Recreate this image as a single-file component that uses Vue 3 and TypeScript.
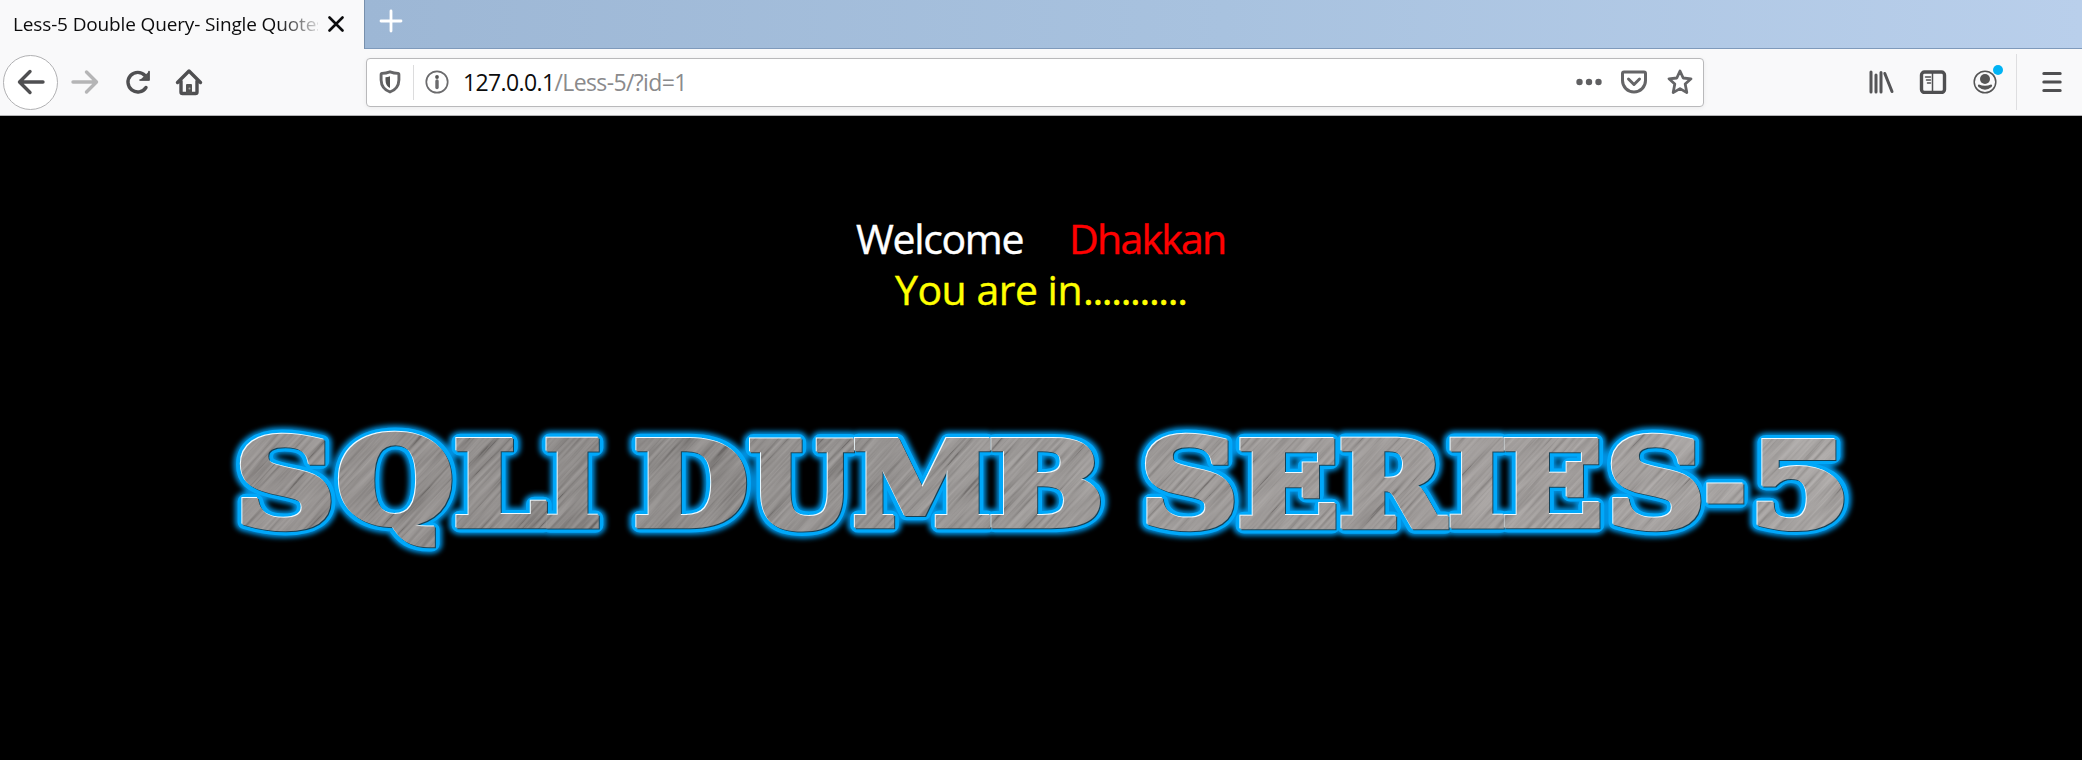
<script setup lang="ts">
interface Glyph { ch: string; x1: number; x2: number; y1: number; y2: number }

const glyphs: Glyph[] = [
  { ch: 'S', x1: 240, x2: 331, y1: 431, y2: 529 },
  { ch: 'Q', x1: 339, x2: 452, y1: 430, y2: 546 },
  { ch: 'L', x1: 456, x2: 547, y1: 435, y2: 526 },
  { ch: 'I', x1: 546, x2: 599, y1: 435, y2: 526 },
  { ch: 'D', x1: 636, x2: 747, y1: 435, y2: 526 },
  { ch: 'U', x1: 750, x2: 855, y1: 435, y2: 529 },
  { ch: 'M', x1: 855, x2: 991, y1: 435, y2: 526 },
  { ch: 'B', x1: 991, x2: 1100, y1: 435, y2: 526 },
  { ch: 'S', x1: 1145, x2: 1234, y1: 431, y2: 529 },
  { ch: 'E', x1: 1240, x2: 1336, y1: 435, y2: 527 },
  { ch: 'R', x1: 1341, x2: 1449, y1: 435, y2: 527 },
  { ch: 'I', x1: 1450, x2: 1504, y1: 435, y2: 526 },
  { ch: 'E', x1: 1504, x2: 1600, y1: 435, y2: 526 },
  { ch: 'S', x1: 1611, x2: 1701, y1: 431, y2: 529 },
  { ch: '-', x1: 1707, x2: 1744, y1: 482, y2: 502 },
  { ch: '5', x1: 1757, x2: 1844, y1: 435, y2: 529 },
]

// Stretch each letter so that its ink, with the thickening stroke, fills its box.
const inset = 3.5
const ctx = document.createElement('canvas').getContext('2d')!
ctx.font = 'bold 120px "DejaVu Serif"'
const letters = glyphs.map((g) => {
  const m = ctx.measureText(g.ch)
  const w = m.actualBoundingBoxRight + m.actualBoundingBoxLeft
  const h = m.actualBoundingBoxAscent + m.actualBoundingBoxDescent
  const sx = (g.x2 - g.x1 - inset * 2) / w
  const sy = (g.y2 - g.y1 - inset * 2) / h
  const tx = g.x1 + inset + m.actualBoundingBoxLeft * sx
  const ty = g.y1 + inset + m.actualBoundingBoxAscent * sy
  return { ch: g.ch, transform: `matrix(${sx} 0 0 ${sy} ${tx} ${ty - 410})` }
})
</script>

<template>
  <div class="window">
    <header class="tabs">
      <div class="tab">
        <span class="title">Less-5 Double Query- Single Quotes</span>
        <svg class="close" width="16" height="16" viewBox="0 0 16 16"><path d="M1.5 1.5l13 13M14.5 1.5l-13 13" /></svg>
      </div>
      <div class="strip">
        <svg width="24" height="24" viewBox="0 0 24 24"><path d="M12 2v20M2 12h20" /></svg>
      </div>
    </header>

    <nav class="toolbar">
      <div class="nav">
        <span class="back">
          <svg width="28" height="26" viewBox="0 0 28 26"><path class="thick" d="M26 13H3M13 2.5L2.5 13L13 23.5" /></svg>
        </span>
        <svg class="fwd" width="28" height="26" viewBox="0 0 28 26"><path class="thick" d="M2 13h23M15.500 3L25.500 13L15.500 23" /></svg>
        <svg class="reload" width="28" height="26" viewBox="0 0 28 26">
          <path class="thick" d="M21 18.500A9.800 9.800 0 1 1 20 6.500" />
          <path class="solid" d="M24.500 2v9.500h-10z" />
          <path class="thick2" d="M24 2.500v8.500h-9" />
        </svg>
        <svg class="home" width="28" height="28" viewBox="0 0 28 28">
          <path class="thick" d="M2.500 14.500L14 3l11.500 11.500M6 13v11a1.500 1.500 0 0 0 1.500 1.500h13A1.500 1.500 0 0 0 22 24V13" />
          <path class="solid" d="M11 26v-9a1 1 0 0 1 1-1h4a1 1 0 0 1 1 1v9z" />
          <circle cx="14.500" cy="20.500" r="1" fill="#aaa" />
        </svg>
      </div>

      <div class="url">
        <svg class="shield" width="22" height="24" viewBox="0 0 22 24">
          <path d="M11 1.800Q15 3.200 19 3.400Q20 3.500 19.900 5v5C19.700 16 16.500 20 11 22C5.500 20 2.300 16 2.100 10V5Q2 3.500 3 3.400Q7 3.200 11 1.800z" />
          <path class="solid" d="M11 6.200Q9 7 6.500 7.200V10c0 4 1.500 6.500 4.500 8z" />
        </svg>
        <i class="sep"></i>
        <svg class="info" width="24" height="24" viewBox="0 0 24 24">
          <circle cx="12" cy="12" r="10.700" />
          <path class="stem" d="M12 11v6.500" /><circle class="solid" cx="12" cy="7" r="1.900" />
        </svg>
        <span class="address"><b>127.0.0.1</b>/Less-5/?id=1</span>
        <svg class="dots" width="26" height="8" viewBox="0 0 26 8"><circle cx="3.500" cy="4" r="3.200" /><circle cx="13" cy="4" r="3.200" /><circle cx="22.500" cy="4" r="3.200" /></svg>
        <svg class="pocket" width="26" height="24" viewBox="0 0 26 24">
          <path d="M3 2h20a1.500 1.500 0 0 1 1.500 1.500v7a11.500 11.500 0 0 1-23 0v-7A1.500 1.500 0 0 1 3 2z" /><path d="M7.500 9L13 14.500L18.500 9" />
        </svg>
        <svg class="star" width="26" height="26" viewBox="0 0 26 26"><path d="M13 2l3.200 7 7.800.8-5.800 5.200 1.600 8.600-6.800-4-6.800 4L7.800 15 2 9.800l7.800-.8z" /></svg>
      </div>

      <div class="tools">
        <svg class="library" width="26" height="24" viewBox="0 0 26 24"><path d="M3 2v20M8 5v17M13 2.500v19.500M16.800 3.500L24 21.500" /></svg>
        <svg class="sidebar" width="28" height="24" viewBox="0 0 28 24">
          <rect x="2.500" y="2" width="23" height="20.500" rx="3" /><path class="thin" d="M13.500 3v19M6.500 7h5M7.500 10h4M8.500 13h3" />
        </svg>
        <div class="account">
          <svg width="24" height="24" viewBox="0 0 24 24">
            <circle cx="12" cy="12" r="10.800" /><circle class="solid" cx="12" cy="9" r="5" />
            <path class="solid" d="M6 14.500q6 2.500 12 0q2 .5.500 2.500q-6.500 5.500-13 0q-1.500-2 .5-2.500z" />
          </svg>
          <i class="badge"></i>
        </div>
        <i class="divider"></i>
        <svg class="menu" width="20" height="22" viewBox="0 0 20 22"><path d="M1.800 2.500h16.400M1.800 11h16.400M1.800 19.500h16.400" /></svg>
      </div>
    </nav>

    <main class="page">
      <p class="welcome"><span class="hello">Welcome</span><span class="name">Dhakkan</span></p>
      <p class="status"><span class="inn">You are in</span><span class="ell">...........</span></p>
      <svg class="banner" width="2082" height="170" viewBox="0 0 2082 170">
        <defs>
          <g id="word">
            <text v-for="(l, i) in letters" :key="i" :transform="l.transform">{{ l.ch }}</text>
          </g>
          <mask id="wordMask" maskUnits="userSpaceOnUse" x="0" y="0" width="2082" height="170">
            <use href="#word" class="face" />
          </mask>
          <linearGradient id="metal" x1="0" x2="1" y1="0" y2="0">
            <stop offset="0" stop-color="#918c8a" /><stop offset=".27" stop-color="#84807e" />
            <stop offset=".5" stop-color="#95918f" /><stop offset=".75" stop-color="#9a9593" /><stop offset="1" stop-color="#a39f9d" />
          </linearGradient>
          <filter id="soft" x="-2%" y="-20%" width="104%" height="140%"><feGaussianBlur stdDeviation="2.4" /></filter>
          <filter id="brushed" x="0" y="0" width="100%" height="100%">
            <feTurbulence type="fractalNoise" baseFrequency=".012 .3" numOctaves="3" seed="4" />
            <feColorMatrix values="1.8 0 0 0 -.4  1.8 0 0 0 -.4  1.8 0 0 0 -.4  0 0 0 0 1" />
          </filter>
        </defs>
        <use href="#word" class="glow" filter="url(#soft)" />
        <use href="#word" class="halo" />
        <use href="#word" class="shade" x="1" y="1" />
        <use href="#word" class="light" x="-1" y="-1" />
        <g mask="url(#wordMask)">
          <rect x="200" y="0" width="1680" height="170" fill="url(#metal)" />
          <g opacity=".19"><rect x="-300" y="-100" width="2400" height="1900" transform="rotate(-47)" filter="url(#brushed)" /></g>
        </g>
      </svg>
    </main>
  </div>
</template>

<style>
body { margin: 0; background: #000; }
</style>

<style scoped>
.window { width: 2082px; height: 760px; overflow: hidden; background: #000; font-family: "Open Sans", "Noto Sans", sans-serif; display: flex; flex-direction: column; }
svg { display: block; flex: none; fill: none; stroke-linecap: round; stroke-linejoin: round; }
.tabs { display: flex; height: 49px; background: #f9f9fa; flex: none; }
.tab { width: 364px; display: flex; align-items: center; box-sizing: border-box; padding: 0 0 2px 13px; }
.title { width: 305px; overflow: hidden; white-space: nowrap; font-size: 19px; line-height: 30px; letter-spacing: -0.14px; color: #0c0c0d; -webkit-mask-image: linear-gradient(90deg, #000 265px, transparent 312px); mask-image: linear-gradient(90deg, #000 265px, transparent 312px); }
.close { margin-left: 10px; stroke: #0c0c0d; stroke-width: 2.6; }
.strip { flex: 1; box-sizing: border-box; border-left: 1px solid #7890ac; border-bottom: 1px solid #7f9abb; background: linear-gradient(90deg, #9db7d5, #a8c2df 50%, #b9cfeb); padding: 9px 0 0 14px; }
.strip svg { stroke: #fff; stroke-width: 2.8; }
.toolbar { height: 67px; box-sizing: border-box; border-bottom: 1px solid #b4b4b6; background: #f9f9fa; display: flex; align-items: center; flex: none; }
.nav { width: 366px; display: flex; align-items: center; flex: none; }
.thick { stroke: #4f4f51; stroke-width: 3.4; }
.thick2 { stroke: #4f4f51; stroke-width: 1.6; }
.nav .solid, .url .solid, .tools .solid { fill: #555; stroke: none; }
.back { width: 53px; height: 53px; margin-left: 3px; border: 1px solid #b1b1b3; border-radius: 50%; background: #fff; display: flex; align-items: center; justify-content: center; }
.fwd { margin-left: 13px; }
.fwd .thick { stroke: #b5b5b6; }
.reload { margin-left: 26px; }
.home { margin-left: 22px; }
.url { width: 1338px; height: 49px; box-sizing: border-box; border: 1px solid #b9b9bb; border-radius: 4px; background: #fff; box-shadow: 0 1px 5px rgba(0, 0, 0, .06); display: flex; align-items: center; flex: none; }
.shield { margin-left: 12px; stroke: #656567; stroke-width: 2.9; }
.sep { width: 1px; height: 35px; margin-left: 12px; background: #dcdcdd; }
.info { margin-left: 11px; stroke: #6b6b6d; stroke-width: 1.7; }
.stem { stroke-width: 3.4; }
.address { width: 1100px; flex: none; margin-left: 14px; font-size: 23px; line-height: 30px; letter-spacing: -0.62px; color: #8a8a8c; }
.address b { font-weight: 400; color: #0c0c0d; }
.dots { margin-left: 13px; }
.dots circle { fill: #606062; }
.pocket { margin-left: 19px; stroke: #656567; stroke-width: 3; }
.star { margin-left: 20px; stroke: #656567; stroke-width: 2.8; }
.tools { flex: 1; display: flex; align-items: center; }
.library { margin-left: 164px; stroke: #555557; stroke-width: 3; }
.sidebar { margin-left: 25px; stroke: #4f4f51; stroke-width: 3.4; }
.sidebar .thin { stroke-width: 1.5; }
.account { position: relative; margin-left: 26px; }
.account svg { stroke: #555; stroke-width: 1.5; }
.badge { position: absolute; left: 20px; top: -5px; width: 10px; height: 10px; border-radius: 50%; background: #00b3f4; }
.divider { width: 1px; height: 56px; margin-left: 19px; background: #dedee0; }
.menu { margin-left: 25px; stroke: #4f4f51; stroke-width: 3; }
.page { height: 644px; background: #000; padding-top: 97px; box-sizing: border-box; }
p { margin: 0; height: 51px; line-height: 51px; font-size: 41px; display: flex; white-space: pre; }
.welcome { padding-left: 856px; color: #fff; letter-spacing: -1.35px; -webkit-text-stroke: .4px; }
.hello { width: 213px; }
.name { color: #f00; letter-spacing: -1.75px; }
.status { padding-left: 895px; color: #ff0; letter-spacing: -.5px; -webkit-text-stroke: .4px; }
.inn { width: 188px; }
.ell { letter-spacing: -1.35px; }
.banner { margin-top: 97px; font: bold 120px "DejaVu Serif", serif; }
.banner text { vector-effect: non-scaling-stroke; }
.glow { fill: #0092e2; stroke: #0092e2; stroke-width: 21px; }
.halo { fill: #00a8fa; stroke: #00a8fa; stroke-width: 16px; }
.shade { fill: #164257; stroke: #164257; stroke-width: 7px; }
.light { fill: #eefaff; stroke: #eefaff; stroke-width: 7px; }
.face { fill: #fff; stroke: #fff; stroke-width: 7px; }
.shade, .light, .face { stroke-linejoin: miter; }
</style>
